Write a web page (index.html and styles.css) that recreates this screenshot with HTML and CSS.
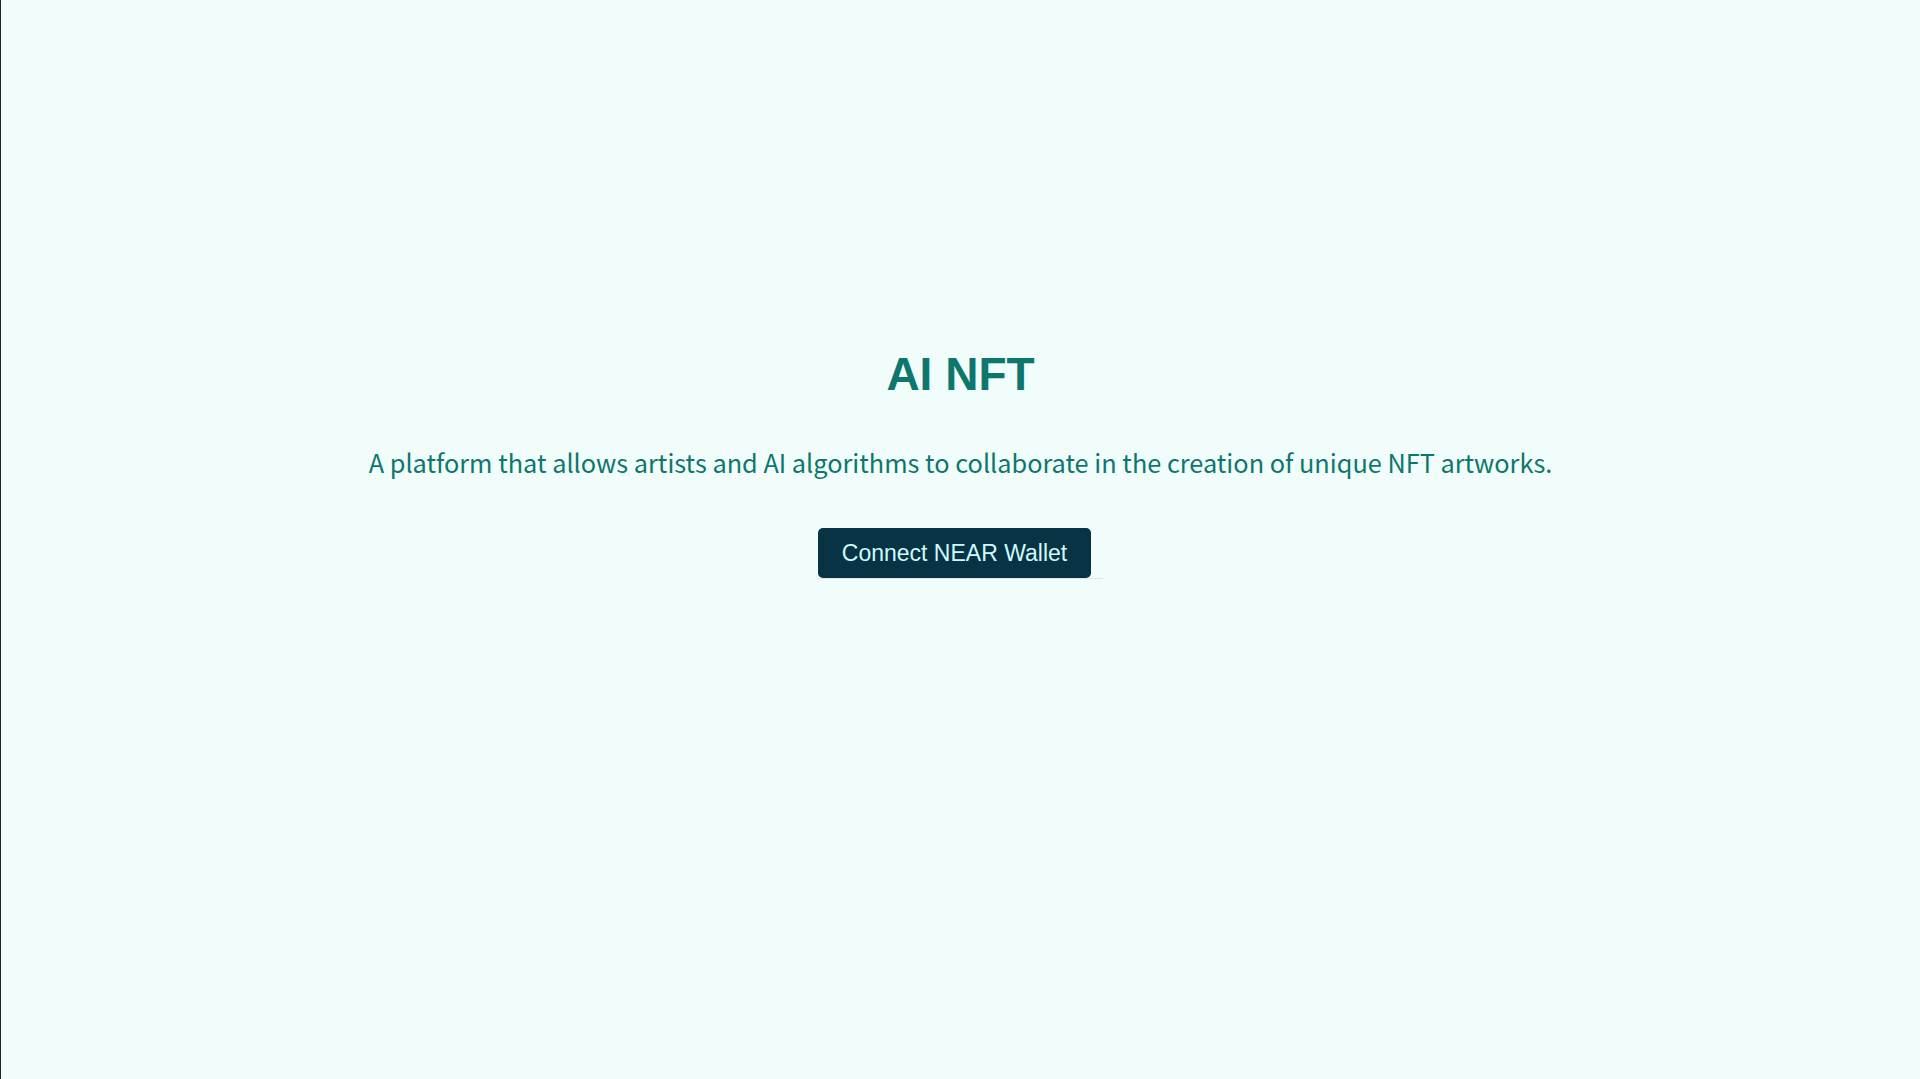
FILE: index.html
```html
<!DOCTYPE html>
<html lang="en">
<head>
<meta charset="utf-8">
<title>AI NFT</title>
<link rel="stylesheet" href="styles.css">
</head>
<body>
<main class="page">
  <section class="hero">
    <h1 class="title">AI NFT</h1>
    <p class="lead">A platform that allows artists and AI algorithms to collaborate in the creation of unique NFT artworks.</p>
    <div class="actions">
      <button class="connect" type="button">Connect NEAR Wallet</button>
    </div>
  </section>
</main>
</body>
</html>
```
FILE: styles.css
```css
html, body {
  margin: 0;
  padding: 0;
  height: 100%;
  background: #f0fdfa;
}
.page {
  box-sizing: border-box;
  min-height: 100%;
  border-left: 1px solid #1f2a2a;
  display: flex;
  flex-direction: column;
  align-items: center;
}
.hero {
  padding-top: 351px;
  display: flex;
  flex-direction: column;
  align-items: center;
}
.title {
  margin: 0;
  font-family: "Liberation Sans", Arial, sans-serif;
  font-weight: 700;
  font-size: 46px;
  line-height: 46px;
  color: #0f766e;
}
.lead {
  margin: 50px 0 0;
  font-family: "Noto Sans CJK JP", "Noto Sans", sans-serif;
  font-size: 25.3px;
  line-height: 30px;
  color: #0f766e;
}
.actions {
  margin-top: 51px;
  width: 285px;
  border-bottom: 1px solid #dfe6e6;
  display: flex;
}
.connect {
  box-sizing: border-box;
  height: 50px;
  width: 273px;
  padding: 0;
  border: 0;
  border-radius: 5px;
  background: #083344;
  color: #cffafe;
  font-family: "Liberation Sans", Arial, sans-serif;
  font-size: 23px;
  cursor: pointer;
}
```
